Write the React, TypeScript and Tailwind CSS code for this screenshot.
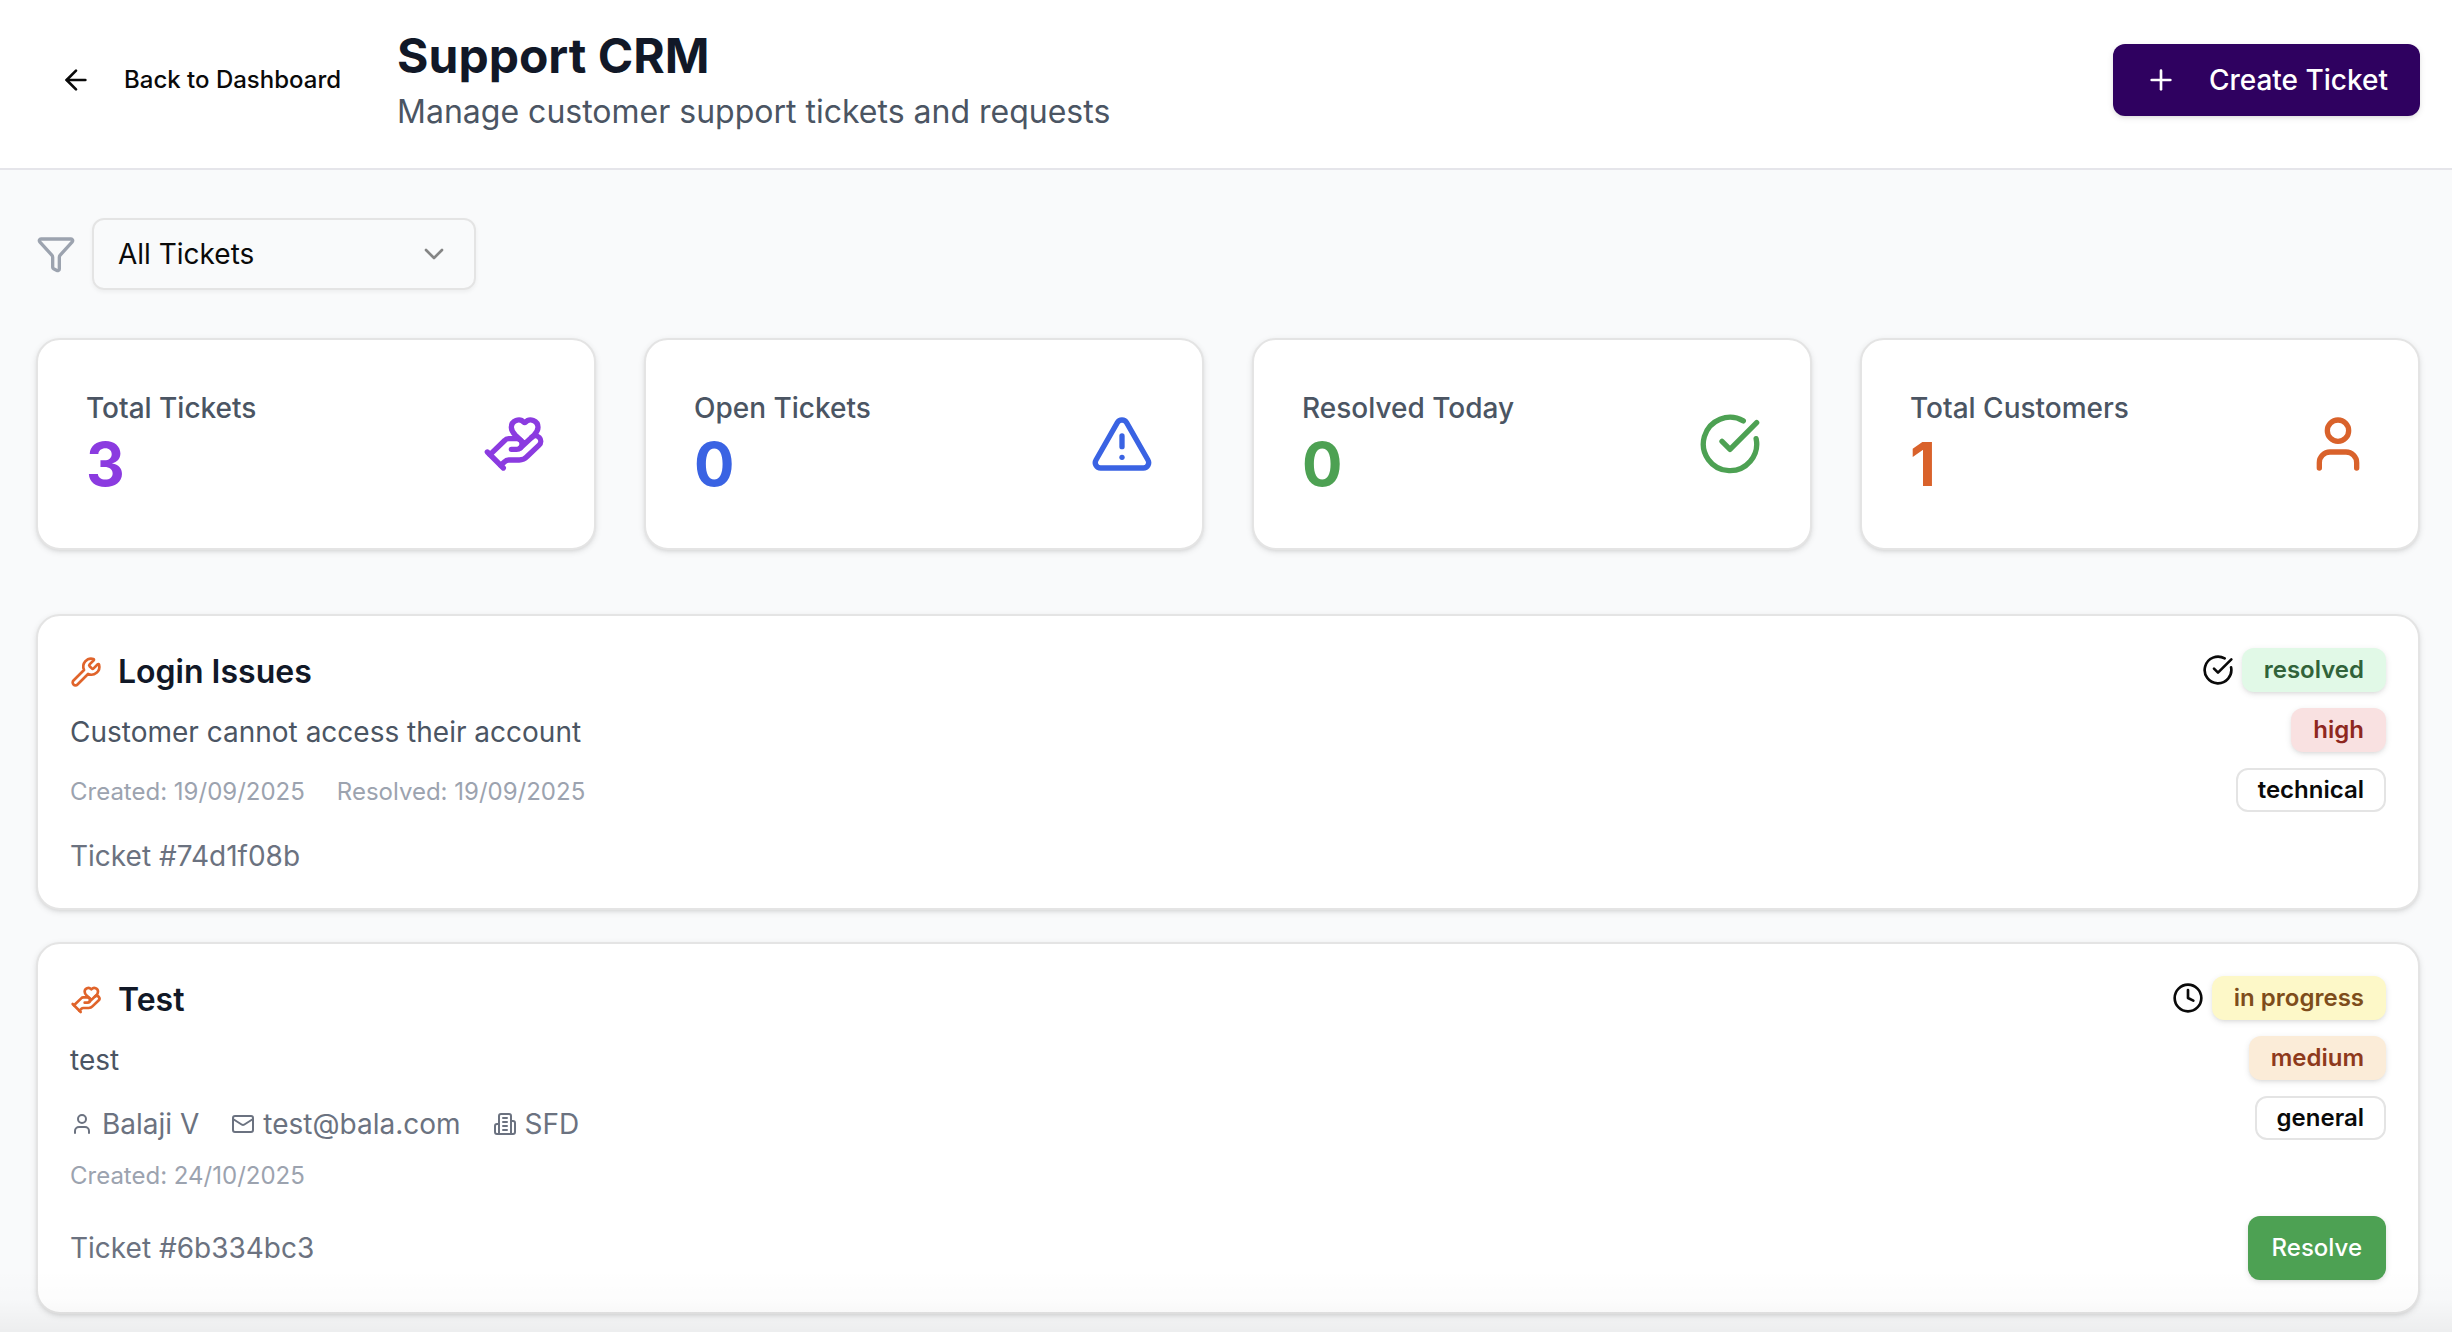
import { useState } from 'react'
import type { ComponentType } from 'react'
import {
  ArrowLeft,
  ChevronDown,
  CircleCheckBig,
  Clock,
  Funnel,
  HandHeart,
  Mail,
  Plus,
  TriangleAlert,
  User,
  Wrench,
} from 'lucide-react'

type IconType = ComponentType<{ className?: string }>

interface Stat {
  label: string
  value: number
  color: string
  icon: IconType
}

interface Ticket {
  id: string
  title: string
  description: string
  status: 'open' | 'in progress' | 'resolved'
  priority: 'medium' | 'high'
  category: 'technical' | 'general'
  created: string
  resolved?: string
  customer?: { name: string; email: string; company: string }
}

const stats: Stat[] = [
  { label: 'Total Tickets', value: 3, color: 'text-[#8b3be0]', icon: HandHeart },
  { label: 'Open Tickets', value: 0, color: 'text-[#3a63e3]', icon: TriangleAlert },
  { label: 'Resolved Today', value: 0, color: 'text-[#4da153]', icon: CircleCheckBig },
  { label: 'Total Customers', value: 1, color: 'text-[#d9622b]', icon: User },
]

const tickets: Ticket[] = [
  {
    id: '74d1f08b',
    title: 'Login Issues',
    description: 'Customer cannot access their account',
    status: 'resolved',
    priority: 'high',
    category: 'technical',
    created: '19/09/2025',
    resolved: '19/09/2025',
  },
  {
    id: '6b334bc3',
    title: 'Test',
    description: 'test',
    status: 'in progress',
    priority: 'medium',
    category: 'general',
    created: '24/10/2025',
    customer: { name: 'Balaji V', email: 'test@bala.com', company: 'SFD' },
  },
]

const statusColors = {
  open: 'bg-[#dfeafd] text-[#2b44a5]',
  'in progress': 'bg-[#fdf8c8] text-[#7e4d1b]',
  resolved: 'bg-[#e1f9e7] text-[#31633a]',
}

const priorityColors = {
  medium: 'bg-[#fbecd8] text-[#8e3a1c]',
  high: 'bg-[#f9e1e1] text-[#8e2720]',
}

const raised = 'shadow-[0_2px_6px_rgba(0,0,0,0.1),0_2px_4px_-2px_rgba(0,0,0,0.1)]'

function Building({ className }: { className?: string }) {
  return (
    <svg
      className={className}
      viewBox="0 0 24 24"
      fill="none"
      stroke="currentColor"
      strokeWidth={2}
      strokeLinecap="round"
      strokeLinejoin="round"
    >
      <path d="M6 22V4a2 2 0 0 1 2-2h8a2 2 0 0 1 2 2v18Z" />
      <path d="M6 12H4a2 2 0 0 0-2 2v6a2 2 0 0 0 2 2h2" />
      <path d="M18 9h2a2 2 0 0 1 2 2v9a2 2 0 0 1-2 2h-2" />
      <path d="M10 6h4M10 10h4M10 14h4M10 18h4" />
    </svg>
  )
}

function StatCard({ stat }: { stat: Stat }) {
  const Icon = stat.icon
  return (
    <div className={`flex items-center justify-between rounded-3xl border-2 border-[#e4e4e4] bg-white p-12 ${raised}`}>
      <div>
        <p className="text-[28px] leading-[40px] font-medium text-[#4b5563]">{stat.label}</p>
        <p className={`text-[60px] leading-[72px] font-bold ${stat.color}`}>{stat.value}</p>
      </div>
      <Icon className={`size-16 ${stat.color}`} />
    </div>
  )
}

function TicketCard({ ticket }: { ticket: Ticket }) {
  const CategoryIcon = ticket.category === 'technical' ? Wrench : HandHeart
  const StatusIcon = ticket.status === 'resolved' ? CircleCheckBig : Clock
  const badge = 'rounded-xl border-2 px-5 py-1 text-[24px] leading-[32px] font-semibold'

  return (
    <article className={`rounded-3xl border-2 border-[#e4e4e4] bg-white p-8 ${raised}`}>
      <div className="flex items-start justify-between">
        <div>
          <div className="mb-4 flex items-center gap-4">
            <CategoryIcon className="size-8 text-[#e0642b]" />
            <h3 className="text-[32px] leading-[48px] font-semibold text-[#111827]">{ticket.title}</h3>
          </div>
          <p className="mb-6 text-[28px] leading-[40px] text-[#4b5563]">{ticket.description}</p>
          {ticket.customer && (
            <div className="mb-4 flex items-center gap-8 text-[28px] leading-[40px] text-[#6b7280]">
              <span className="flex items-center gap-2">
                <User className="size-6" />
                {ticket.customer.name}
              </span>
              <span className="flex items-center gap-2">
                <Mail className="size-6" />
                {ticket.customer.email}
              </span>
              <span className="flex items-center gap-2">
                <Building className="size-6" />
                {ticket.customer.company}
              </span>
            </div>
          )}
          <div className="flex items-center gap-8 text-[24px] leading-[32px] text-[#9ca3af]">
            <span>Created: {ticket.created}</span>
            {ticket.resolved && <span>Resolved: {ticket.resolved}</span>}
          </div>
        </div>

        <div className="flex flex-col items-end gap-4">
          <div className="flex items-center gap-2">
            <StatusIcon className="size-8 text-[#0a0a0a]" />
            <span className={`${badge} border-transparent ${raised} ${statusColors[ticket.status]}`}>
              {ticket.status}
            </span>
          </div>
          <span className={`${badge} border-transparent ${raised} ${priorityColors[ticket.priority]}`}>
            {ticket.priority}
          </span>
          <span className={`${badge} border-[#e4e4e4] text-[#0a0a0a]`}>{ticket.category}</span>
        </div>
      </div>

      <div className="mt-6 flex items-center justify-between">
        <p className="text-[28px] leading-[40px] text-[#6b7280]">Ticket #{ticket.id}</p>
        {ticket.status !== 'resolved' && (
          <button
            className={`h-16 rounded-xl bg-[#4da153] px-6 text-[24px] leading-[32px] font-medium text-white hover:bg-[#448f4a] ${raised}`}
          >
            Resolve
          </button>
        )}
      </div>
    </article>
  )
}

export default function App() {
  const [filter, setFilter] = useState('all')
  const visible = tickets.filter((t) => filter === 'all' || t.status === filter)

  return (
    <div className="relative min-h-screen bg-[#f9fafb] font-['Inter',sans-serif] text-[#0a0a0a]">
      {/* Header */}
      <header className="flex items-center justify-between border-b-2 border-[#e5e5ea] bg-white pt-6 pr-8 pb-8 pl-9">
        <div className="flex items-center gap-8">
          <button className="flex h-16 items-center gap-8 rounded-xl px-6 text-[24px] leading-[32px] font-medium">
            <ArrowLeft className="size-8" />
            Back to Dashboard
          </button>
          <div>
            <h1 className="text-[48px] leading-[64px] font-bold text-[#111827]">Support CRM</h1>
            <p className="text-[32px] leading-[48px] text-[#4b5563]">Manage customer support tickets and requests</p>
          </div>
        </div>
        <button
          className={`flex h-[72px] items-center gap-8 rounded-xl bg-[#2f0160] px-8 text-[28px] leading-[40px] font-medium text-white ${raised}`}
        >
          <Plus className="size-8" />
          Create Ticket
        </button>
      </header>

      <main className="pt-12 pr-8 pb-4 pl-9">
        {/* Filter */}
        <div className="mb-12 flex items-center gap-4">
          <Funnel className="size-10 text-[#9ca3af]" />
          <div className="relative">
            <select
              aria-label="Filter tickets"
              value={filter}
              onChange={(e) => setFilter(e.target.value)}
              className="block h-[72px] w-96 appearance-none rounded-xl border-2 border-[#e4e4e4] bg-transparent px-6 text-[28px] leading-[40px] shadow-[0_2px_4px_rgba(0,0,0,0.05)]"
            >
              <option value="all">All Tickets</option>
              <option value="open">Open</option>
              <option value="in progress">In Progress</option>
              <option value="resolved">Resolved</option>
            </select>
            <ChevronDown className="pointer-events-none absolute top-5 right-[26px] size-8 text-[#858585]" />
          </div>
        </div>

        {/* Stats */}
        <div className="mb-16 grid grid-cols-4 gap-12">
          {stats.map((stat) => (
            <StatCard key={stat.label} stat={stat} />
          ))}
        </div>

        {/* Tickets */}
        <div className="flex flex-col gap-8">
          {visible.map((ticket) => (
            <TicketCard key={ticket.id} ticket={ticket} />
          ))}
        </div>
      </main>

      {/* Fade at the bottom edge */}
      <div className="pointer-events-none absolute inset-x-0 bottom-0 h-16 bg-linear-to-t from-black/5 via-black/1 to-transparent" />
    </div>
  )
}
